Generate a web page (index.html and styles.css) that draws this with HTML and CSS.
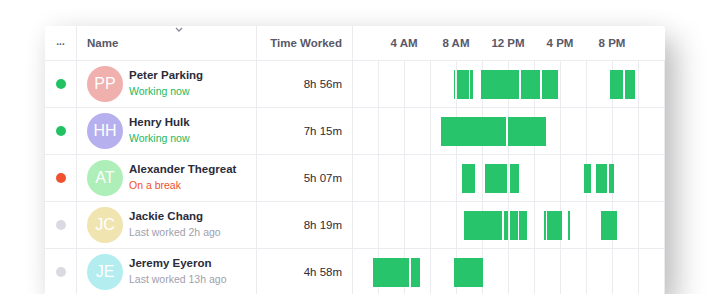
FILE: index.html
```html
<!DOCTYPE html>
<html lang="en">
<head>
    <meta charset="UTF-8">
    <meta name="viewport" content="width=device-width, initial-scale=1.0">
    <title>Team Timeline</title>
    <link rel="stylesheet" href="styles.css">
</head>
<body>
    <div class="card">
        <div class="row head">
            <div class="cell col-status">...</div>
            <div class="cell col-name">
                Name
                <svg class="sort-icon" width="8" height="5" viewBox="0 0 8 5"><path d="M1 1 L4 4 L7 1" fill="none" stroke="#8a8a9a" stroke-width="1.3"/></svg>
            </div>
            <div class="cell col-time">Time Worked</div>
            <div class="cell col-track axis">
                <span class="tick" style="left: 16.667%">4 AM</span>
                <span class="tick" style="left: 33.333%">8 AM</span>
                <span class="tick" style="left: 50%">12 PM</span>
                <span class="tick" style="left: 66.667%">4 PM</span>
                <span class="tick" style="left: 83.333%">8 PM</span>
            </div>
        </div>

        <!-- Peter -->
        <div class="row">
            <div class="cell col-status"><span class="dot working"></span></div>
            <div class="cell col-name">
                <div class="avatar pp">PP</div>
                <div class="person">
                    <div class="person-name">Peter Parking</div>
                    <div class="person-state working">Working now</div>
                </div>
            </div>
            <div class="cell col-time">8h 56m</div>
            <div class="cell col-track">
                <span class="bar" style="left: 32.28%; width: 0.45%"></span>
                <span class="bar" style="left: 33.43%; width: 3.65%"></span>
                <span class="bar" style="left: 37.6%; width: 0.77%"></span>
                <span class="bar" style="left: 41.03%; width: 12.28%"></span>
                <span class="bar" style="left: 53.85%; width: 6.19%"></span>
                <span class="bar" style="left: 60.58%; width: 5.13%"></span>
                <span class="bar" style="left: 82.47%; width: 4.07%"></span>
                <span class="bar" style="left: 87.18%; width: 3.3%"></span>
            </div>
        </div>

        <!-- Henry -->
        <div class="row">
            <div class="cell col-status"><span class="dot working"></span></div>
            <div class="cell col-name">
                <div class="avatar hh">HH</div>
                <div class="person">
                    <div class="person-name">Henry Hulk</div>
                    <div class="person-state working">Working now</div>
                </div>
            </div>
            <div class="cell col-time">7h 15m</div>
            <div class="cell col-track">
                <span class="bar" style="left: 28.3%; width: 20.74%"></span>
                <span class="bar" style="left: 49.58%; width: 12.28%"></span>
            </div>
        </div>

        <!-- Alexander -->
        <div class="row">
            <div class="cell col-status"><span class="dot break"></span></div>
            <div class="cell col-name">
                <div class="avatar at">AT</div>
                <div class="person">
                    <div class="person-name">Alexander Thegreat</div>
                    <div class="person-state break">On a break</div>
                </div>
            </div>
            <div class="cell col-time">5h 07m</div>
            <div class="cell col-track">
                <span class="bar" style="left: 34.84%; width: 4.26%"></span>
                <span class="bar" style="left: 42.21%; width: 7.24%"></span>
                <span class="bar" style="left: 50.42%; width: 2.88%"></span>
                <span class="bar" style="left: 74.13%; width: 2.15%"></span>
                <span class="bar" style="left: 77.88%; width: 3.53%"></span>
                <span class="bar" style="left: 82.05%; width: 1.51%"></span>
            </div>
        </div>

        <!-- Jackie -->
        <div class="row">
            <div class="cell col-status"><span class="dot idle"></span></div>
            <div class="cell col-name">
                <div class="avatar jc">JC</div>
                <div class="person">
                    <div class="person-name">Jackie Chang</div>
                    <div class="person-state">Last worked 2h ago</div>
                </div>
            </div>
            <div class="cell col-time">8h 19m</div>
            <div class="cell col-track">
                <span class="bar" style="left: 35.48%; width: 12.37%"></span>
                <span class="bar" style="left: 48.3%; width: 1.47%"></span>
                <span class="bar" style="left: 50.32%; width: 2.47%"></span>
                <span class="bar" style="left: 53.3%; width: 2.47%"></span>
                <span class="bar" style="left: 61.12%; width: 0.64%"></span>
                <span class="bar" style="left: 62.28%; width: 4.71%"></span>
                <span class="bar" style="left: 69.01%; width: 0.64%"></span>
                <span class="bar" style="left: 79.49%; width: 5.03%"></span>
            </div>
        </div>

        <!-- Jeremy -->
        <div class="row">
            <div class="cell col-status"><span class="dot idle"></span></div>
            <div class="cell col-name">
                <div class="avatar je">JE</div>
                <div class="person">
                    <div class="person-name">Jeremy Eyeron</div>
                    <div class="person-state">Last worked 13h ago</div>
                </div>
            </div>
            <div class="cell col-time">4h 58m</div>
            <div class="cell col-track">
                <span class="bar" style="left: 6.51%; width: 11.44%"></span>
                <span class="bar" style="left: 18.49%; width: 2.88%"></span>
                <span class="bar" style="left: 32.37%; width: 9.39%"></span>
            </div>
        </div>
    </div>
</body>
</html>
```

FILE: styles.css
```css
body {
    margin: 0;
    background-color: #fff;
    font-family: "Liberation Sans", Arial, sans-serif;
    color: #2b2b3a;
    overflow: hidden;
}
.card {
    width: 620px;
    margin: 26px 0 0 45px;
    background-color: #fff;
    border-radius: 3px 3px 0 0;
    box-shadow: 12px 14px 30px rgba(0, 0, 0, 0.24), 0 0 26px rgba(0, 0, 0, 0.05);
}
.row {
    display: grid;
    grid-template-columns: 32px 180px 96px 312px;
    height: 46px;
    border-bottom: 1px solid #ececf0;
}
.row.head {
    height: 34px;
    font-size: 11.5px;
    font-weight: bold;
    color: #585868;
}
.cell {
    display: flex;
    align-items: center;
    border-right: 1px solid #ececf0;
}
.cell:last-child {
    border-right: none;
}
.col-status {
    justify-content: center;
}
.head .col-status {
    font-size: 10px;
    padding-bottom: 3px;
}
.col-name {
    position: relative;
    padding-left: 10px;
}
.col-time {
    justify-content: flex-end;
    padding-right: 10px;
    font-size: 11.5px;
}
.sort-icon {
    position: absolute;
    left: 98px;
    top: 1px;
}
.col-track {
    position: relative;
    background-image: repeating-linear-gradient(to right, transparent 0 25px, #ececf0 25px 26px);
}
.col-track.axis {
    background-image: none;
}
.tick {
    position: absolute;
    top: 50%;
    transform: translate(-50%, -50%);
    margin-left: -1px;
    white-space: nowrap;
}
.bar {
    position: absolute;
    top: 9px;
    height: 29px;
    background-color: #27c46c;
}
.dot {
    width: 10px;
    height: 10px;
    border-radius: 50%;
}
.dot.working {
    background-color: #22c263;
}
.dot.break {
    background-color: #f0512e;
}
.dot.idle {
    background-color: #dadae2;
}
.avatar {
    width: 36px;
    height: 36px;
    border-radius: 50%;
    flex-shrink: 0;
    display: flex;
    align-items: center;
    justify-content: center;
    color: #fff;
    font-size: 16px;
    margin-right: 6px;
}
.avatar.pp { background-color: #f0b0ae; }
.avatar.hh { background-color: #b6b0ee; }
.avatar.at { background-color: #aeeeb8; }
.avatar.jc { background-color: #f0e5b1; }
.avatar.je { background-color: #b3edef; }
.person-name {
    font-size: 11.5px;
    font-weight: bold;
    line-height: 13px;
    margin-bottom: 2px;
    color: #2b2b3a;
}
.person-state {
    font-size: 10.5px;
    line-height: 15px;
    color: #a0a0ac;
}
.person-state.working {
    color: #22b85c;
}
.person-state.break {
    color: #f0502d;
}
```
